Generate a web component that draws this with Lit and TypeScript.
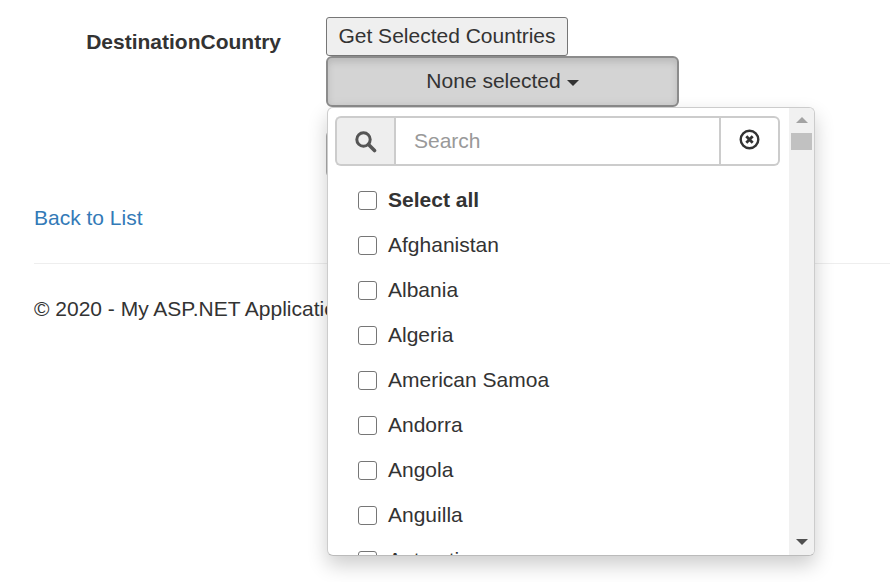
import { LitElement, html, css } from "lit";
import { customElement } from "lit/decorators.js";

const COUNTRIES = ["Afghanistan", "Albania", "Algeria", "American Samoa", "Andorra", "Angola", "Anguilla", "Antarctica"];

@customElement("app-root")
export class AppRoot extends LitElement {
  static styles = css`
    :host { display: block; font-family: "Liberation Sans", Arial, sans-serif; font-size: 21px; line-height: 28.6px; color: #333; background: #fff; min-height: 582px; overflow: hidden; }
    * { box-sizing: border-box; }
    .page { padding: 17px 0 0 34px; }
    .row { display: flex; height: 161px; }
    .label { width: 247px; padding-top: 11px; text-align: right; font-weight: 700; }
    .control { margin-left: 45px; width: 353px; position: relative; display: flex; flex-direction: column; align-items: flex-start; }
    button { font: inherit; color: #333; padding: 0; }
    .get { width: 242px; height: 39px; background: #efefef; border: 1px solid #767676; border-radius: 3px; line-height: 1; padding-bottom: 2px; }
    .multi { width: 353px; height: 51px; background: #d4d4d4; border: 2px solid #8c8c8c; border-radius: 6px; box-shadow: inset 0 4px 7px rgba(0,0,0,.125); display: flex; align-items: center; justify-content: center; gap: 6px; }
    .caret { width: 0; height: 0; border-top: 6px solid #333; border-left: 6px solid transparent; border-right: 6px solid transparent; margin-top: 3px; }
    .behind { margin-top: 23px; width: 80px; height: 48px; background: #e6e6e6; border: 1px solid #adadad; border-radius: 6px; }
    .menu { position: absolute; left: 1px; top: 90px; width: 488px; height: 449px; background: #fff; border: 1px solid #ccc; border-bottom-color: #bbb; border-radius: 6px; box-shadow: 0 9px 20px rgba(0,0,0,.2); display: flex; overflow: hidden; z-index: 2; }
    .content { flex: 1; min-width: 0; overflow: hidden; padding: 8px 7px 0; }
    .search { display: flex; height: 50px; width: 445px; }
    .addon { width: 59px; border: 2px solid #ccc; border-right: 0; background: #eee; border-radius: 6px 0 0 6px; display: flex; align-items: center; justify-content: center; }
    .input { width: 327px; border: 2px solid #ccc; padding-left: 18px; color: #999; display: flex; align-items: center; }
    .clear { flex: 1; border: 2px solid #ccc; border-left: 0; border-radius: 0 6px 6px 0; display: flex; align-items: center; justify-content: center; padding-bottom: 4px; }
    .list { margin-top: 12px; padding-left: 23px; }
    .item { display: flex; align-items: center; height: 45px; gap: 11px; color: #333; }
    .item.all { font-weight: 700; }
    .box { width: 19px; height: 19px; border: 1px solid #767676; border-radius: 3px; background: #fff; flex: none; }
    .sb { width: 25px; flex: none; background: #f1f1f1; display: flex; flex-direction: column; align-items: center; position: relative; }
    .up { width: 0; height: 0; margin-top: 9px; border-bottom: 6px solid #a3a3a3; border-left: 6px solid transparent; border-right: 6px solid transparent; }
    .thumb { width: 21px; height: 17px; margin-top: 10px; background: #c1c1c1; }
    .down { width: 0; height: 0; margin-top: auto; margin-bottom: 10px; border-top: 6px solid #505050; border-left: 6px solid transparent; border-right: 6px solid transparent; }
    .back { display: block; color: #337ab7; text-decoration: none; margin-top: 26px; width: max-content; }
    hr { border: 0; border-top: 1px solid #eee; margin: 30px 0 0; }
    footer { margin-top: 31px; }
  `;

  render() {
    return html`
      <div class="page">
        <div class="row">
          <div class="label">DestinationCountry</div>
          <div class="control">
            <button class="get">Get Selected Countries</button>
            <button class="multi">None selected <span class="caret"></span></button>
            <div class="behind"></div>
            <div class="menu">
              <div class="content">
                <div class="search">
                  <div class="addon">
                    <svg width="23" height="23" viewBox="0 0 23 23" fill="none" stroke="#555">
                      <circle cx="9.5" cy="9.5" r="6.7" stroke-width="3"></circle>
                      <path d="M14.5 14.5L20.5 20.5" stroke-width="3.6" stroke-linecap="round"></path>
                    </svg>
                  </div>
                  <div class="input">Search</div>
                  <div class="clear">
                    <svg width="21" height="21" viewBox="0 0 21 21" fill="none" stroke="#333">
                      <circle cx="10.5" cy="10.5" r="8.8" stroke-width="2.4"></circle>
                      <path d="M7.3 7.3L13.7 13.7M13.7 7.3L7.3 13.7" stroke-width="2.8"></path>
                    </svg>
                  </div>
                </div>
                <div class="list">
                  <div class="item all"><span class="box"></span>Select all</div>
                  ${COUNTRIES.map((c) => html`<div class="item"><span class="box"></span>${c}</div>`)}
                </div>
              </div>
              <div class="sb"><div class="up"></div><div class="thumb"></div><div class="down"></div></div>
            </div>
          </div>
        </div>
        <a class="back" href="#">Back to List</a>
        <hr />
        <footer>© 2020 - My ASP.NET Application</footer>
      </div>
    `;
  }
}
